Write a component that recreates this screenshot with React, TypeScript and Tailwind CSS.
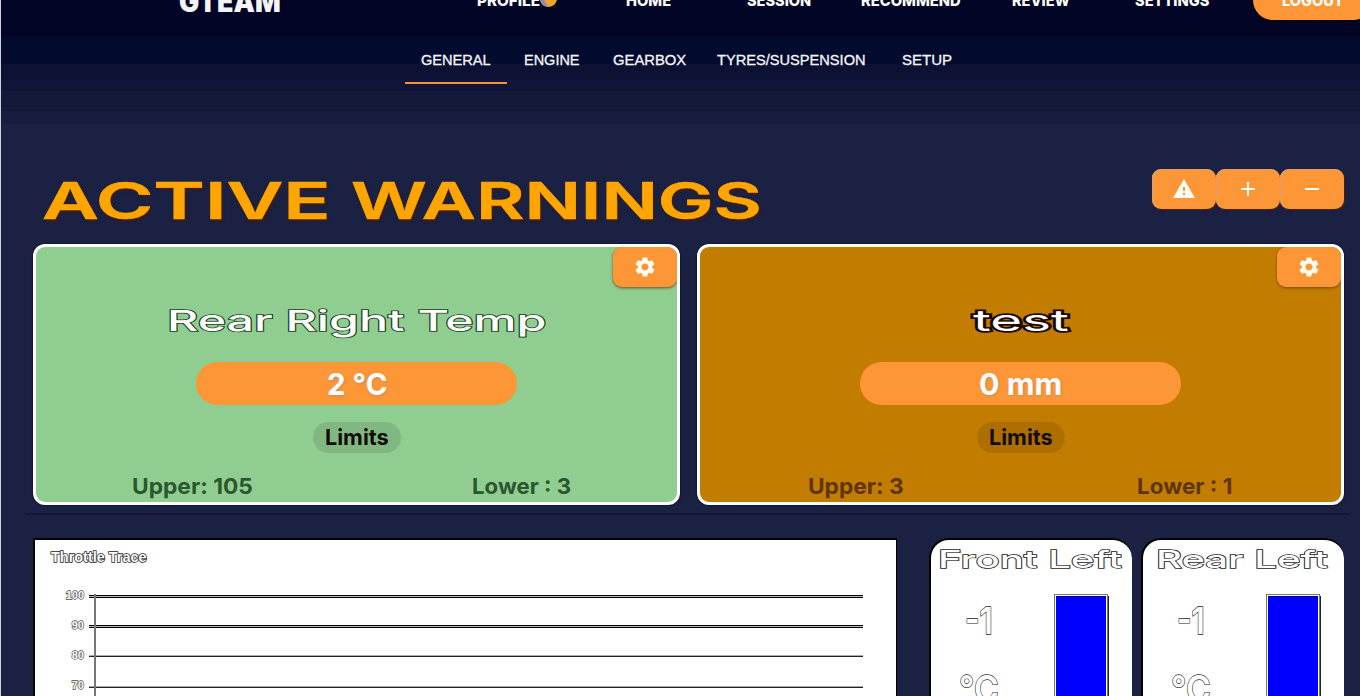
import { useLayoutEffect, useRef, useState } from "react";
import { MdAdd, MdRemove, MdSettings, MdWarning } from "react-icons/md";

/* Stretches one line of text to the width of its box. */
function Fit({ text, className }: { text: string; className: string }) {
  const box = useRef<HTMLSpanElement>(null);
  const line = useRef<HTMLSpanElement>(null);
  const [scale, setScale] = useState(1);
  useLayoutEffect(() => {
    if (box.current && line.current) {
      setScale(box.current.clientWidth / line.current.offsetWidth);
    }
  }, [text]);
  return (
    <span ref={box} className={`block shrink-0 whitespace-nowrap ${className}`}>
      <span ref={line} className="inline-block origin-left" style={{ transform: `scaleX(${scale})` }}>
        {text}
      </span>
    </span>
  );
}

const outline = "text-white [-webkit-text-stroke:1.3px_#222] [paint-order:stroke_fill]";

const links = [
  { label: "PROFILE", cls: "w-[63px] ml-[196px]" },
  { label: "HOME", cls: "w-[45px] ml-[68px]" },
  { label: "SESSION", cls: "w-[64px] ml-[76px]" },
  { label: "RECOMMEND", cls: "w-[100px] ml-[50px]" },
  { label: "REVIEW", cls: "w-[58px] ml-[51px]" },
  { label: "SETTINGS", cls: "w-[74px] ml-[65px]" },
];

const tabs = [
  { label: "GENERAL", cls: "w-[70px]", box: "px-4 border-[#f5943a]" },
  { label: "ENGINE", cls: "w-[56px]", box: "pl-[17px] pr-4 border-transparent" },
  { label: "GEARBOX", cls: "w-[73px]", box: "pl-[17px] pr-4 border-transparent" },
  { label: "TYRES/SUSPENSION", cls: "w-[149px]", box: "pl-[15px] pr-4 border-transparent" },
  { label: "SETUP", cls: "w-[50px]", box: "pl-5 pr-4 border-transparent" },
];

function NavBar() {
  return (
    <nav className="-mt-5 flex h-10 items-center font-['Inter',sans-serif] text-[15px] font-extrabold text-white">
      <Fit text="GTEAM" className="ml-[178px] mt-1 w-[102px] text-[28px] leading-[40px] font-black text-[#f4f4f8]" />
      {links.map((l) => (
        <div key={l.label} className="flex items-center">
          <Fit text={l.label} className={`mt-px leading-[40px] ${l.cls}`} />
          {l.label === "PROFILE" && (
            <svg className="-ml-px mt-[-4px] h-[19px] w-[19px]" viewBox="0 0 19 19">
              <circle cx="9.5" cy="9.5" r="8.5" fill="#f0a22c" />
              <path d="M4 3a8.500 8.500 0 0 0 5 15L4.500 10Z" fill="#8c87bd" />
            </svg>
          )}
        </div>
      ))}
      <button className="ml-[44px] flex h-10 w-[120px] shrink-0 rounded-[20px] bg-[#fd9636] pl-[29px] shadow-[0_1px_2px_#000]">
        <Fit text="LOGOUT" className="mt-px w-[62px] leading-[40px]" />
      </button>
    </nav>
  );
}

function Tabs() {
  return (
    <div className="ml-[404px] mt-[16px] flex h-[48px] font-['Liberation_Sans',Arial,sans-serif] text-[15px] text-[#f1f2f5]">
      {tabs.map((t) => (
        <div key={t.label} className={`flex h-[48px] border-b-2 ${t.box}`}>
          <Fit text={t.label} className={`leading-[48px] [-webkit-text-stroke:0.3px_#fff] ${t.cls}`} />
        </div>
      ))}
    </div>
  );
}

const button =
  "flex h-10 w-16 items-center justify-center rounded-[9px] bg-[#fd9636] text-[24px] text-[#fffdf2]";

function Heading() {
  return (
    <header className="mt-[83px] flex h-[76px] items-start justify-between pl-[41px] pr-4">
      <h1 className="mt-[3px] flex gap-[21px] font-['Inter',sans-serif] text-[51px] leading-[60px] font-semibold text-[#ffa500] [-webkit-text-stroke:0.6px_#ffa500] [text-shadow:1px_2px_2px_#4a1c08]">
        <Fit text="ACTIVE" className="w-[288px]" />
        <Fit text="WARNINGS" className="w-[411px]" />
      </h1>
      <div className="mt-px flex">
        {[MdWarning, MdAdd, MdRemove].map((Icon, i) => (
          <button key={i} className={`${button} shadow-[1px_1px_1px_#5a1d02,inset_1px_1px_1px_#d9a178]`}>
            <Icon />
          </button>
        ))}
      </div>
    </header>
  );
}

type Warning = {
  title: string;
  titleCls: string;
  value: string;
  valueCls: string;
  upper: string;
  upperCls: string;
  lower: string;
  lowerCls: string;
  tone: string;
  ink: string;
};

const warnings: Warning[] = [
  {
    title: "Rear Right Temp",
    titleCls: "w-[380px] font-medium text-white [-webkit-text-stroke:1.6px_#1c3d20] [paint-order:stroke_fill]",
    value: "2 °C",
    valueCls: "w-[60px]",
    upper: "Upper: 105",
    upperCls: "w-[121px] ml-[96px]",
    lower: "Lower : 3",
    lowerCls: "w-[99px] mr-[106px]",
    tone: "bg-[#90cd90]",
    ink: "text-[#2b572e]",
  },
  {
    title: "test",
    titleCls:
      "w-[96px] font-normal text-white [-webkit-text-stroke:3.4px_#1c0800] [paint-order:stroke_fill]",
    value: "0 mm",
    valueCls: "w-[83px]",
    upper: "Upper: 3",
    upperCls: "w-[96px] ml-[108px]",
    lower: "Lower : 1",
    lowerCls: "w-[95px] mr-[109px]",
    tone: "bg-[#c27c00]",
    ink: "text-[#5e3509]",
  },
];

function WarningCard({ w }: { w: Warning }) {
  return (
    <section
      className={`flex h-[261px] flex-col items-center overflow-hidden rounded-[12px] border-[3px] border-white font-['Inter',sans-serif] shadow-[0_0_2px_#00001c] ${w.tone}`}
    >
      <button className={`${button} self-end shadow-[0_1px_3px_#7a4a1a]`}>
        <MdSettings />
      </button>
      <Fit text={w.title} className={`mt-[14px] text-[29px] leading-[40px] ${w.titleCls}`} />
      <div className="mt-[21px] flex h-[43px] w-[321px] shrink-0 justify-center rounded-full bg-[#fd9636]">
        <Fit
          text={w.value}
          className={`text-[30px] leading-[45px] font-bold text-white [text-shadow:1px_1px_2px_#c98a58] ${w.valueCls}`}
        />
      </div>
      <div className="mt-[17px] flex h-[31px] w-[88px] shrink-0 justify-center rounded-full bg-black/10">
        <Fit text="Limits" className="ml-px w-[64px] text-[22px] leading-[31px] font-bold text-[#140c04]" />
      </div>
      <div className={`mt-[17px] flex w-full justify-between text-[22px] leading-[32px] font-bold ${w.ink}`}>
        <Fit text={w.upper} className={w.upperCls} />
        <Fit text={w.lower} className={w.lowerCls} />
      </div>
    </section>
  );
}

const rows = [
  { v: "100", line: "h-[3px] border-y border-black bg-[#bbb]" },
  { v: "90", line: "h-[3px] border-y border-black bg-[#bbb]" },
  { v: "80", line: "h-[2px] border-t border-[#aaa] bg-[#222]" },
  { v: "70", line: "h-[2px] border-t border-[#aaa] bg-[#222]" },
];

function Chart() {
  return (
    <section className="h-[180px] w-[864px] shrink-0 border-l-2 border-r border-t-2 border-black bg-white font-['Liberation_Sans',Arial,sans-serif]">
      <Fit
        text="Throttle Trace"
        className="ml-4 mt-[5px] w-[96px] text-[14px] leading-[24px] text-white font-bold [-webkit-text-stroke:1.5px_#222] [paint-order:stroke_fill]"
      />
      <div className="mt-[11px] flex h-[130px] overflow-hidden">
        <div className="w-[49px] text-right text-[11px] font-bold text-white [-webkit-text-stroke:1.3px_#444] [paint-order:stroke_fill]">
          {rows.map((r) => (
            <div key={r.v} className="h-[30px] leading-[30px]">
              {r.v}
            </div>
          ))}
        </div>
        <div className="ml-[5px] flex w-[774px]">
          <div className="mt-[15px] w-[5px]">
            {rows.map((r) => (
              <div key={r.v} className="h-[30.200px]">
                <div className={r.line} />
              </div>
            ))}
          </div>
          <div className="mt-[14px] grow border-l-2 border-[#777] pt-px">
            {rows.map((r) => (
              <div key={r.v} className="h-[30.200px]">
                <div className={r.line} />
              </div>
            ))}
          </div>
        </div>
      </div>
    </section>
  );
}

function Tyre({ name, nameCls }: { name: string; nameCls: string }) {
  return (
    <section className="h-[180px] w-[203px] shrink-0 rounded-t-[20px] border-l-2 border-t-2 border-black bg-white font-['Inter',sans-serif]">
      <div className="flex justify-center pr-1">
        <Fit text={name} className={`mt-[4px] text-[24px] leading-[31px] font-medium ${outline} ${nameCls}`} />
      </div>
      <div className="mt-[19px] flex">
        <div className="ml-[28px] w-[95px]">
          <Fit text="-1" className={`ml-[6px] mt-[2px] w-[28px] text-[37px] leading-[50px] font-semibold ${outline}`} />
          <Fit text="°C" className={`mt-[18px] w-[40px] text-[37px] leading-[50px] font-semibold ${outline}`} />
        </div>
        <div className="h-[140px] w-[54px] border border-[#777] bg-[#0000ff] shadow-[inset_1px_1px_0_#fff,inset_-1px_0_0_#fff,inset_0_2px_0_#000080,1px_2px_0_#222]" />
      </div>
    </section>
  );
}

export default function App() {
  return (
    <div className="h-[696px] w-[1360px] overflow-hidden border-l border-[#d0d2d8] bg-[#1a2142]">
      <div className="flow-root h-[124px] bg-[linear-gradient(#020525_0_37px,#020a2e_37px_64px,#0c1233_64px_80px,#10163a_80px_91px,#141839_91px_111px,#171d3f_111px_123px,#1a2142_123px)]">
        <NavBar />
        <Tabs />
      </div>
      <div className="-mt-[39px]">
        <Heading />
      </div>
      <div className="grid grid-cols-2 gap-[17px] pl-8 pr-4">
        {warnings.map((w) => (
          <WarningCard key={w.title} w={w} />
        ))}
      </div>
      <div className="ml-[25px] mt-2 h-[2px] w-[1324px] bg-[#14173d]" />
      <div className="mt-[23px] flex h-[180px] pl-8">
        <Chart />
        <div className="ml-8 flex gap-[9px]">
          <Tyre name="Front Left" nameCls="w-[184px]" />
          <Tyre name="Rear Left" nameCls="w-[172px]" />
        </div>
      </div>
    </div>
  );
}
